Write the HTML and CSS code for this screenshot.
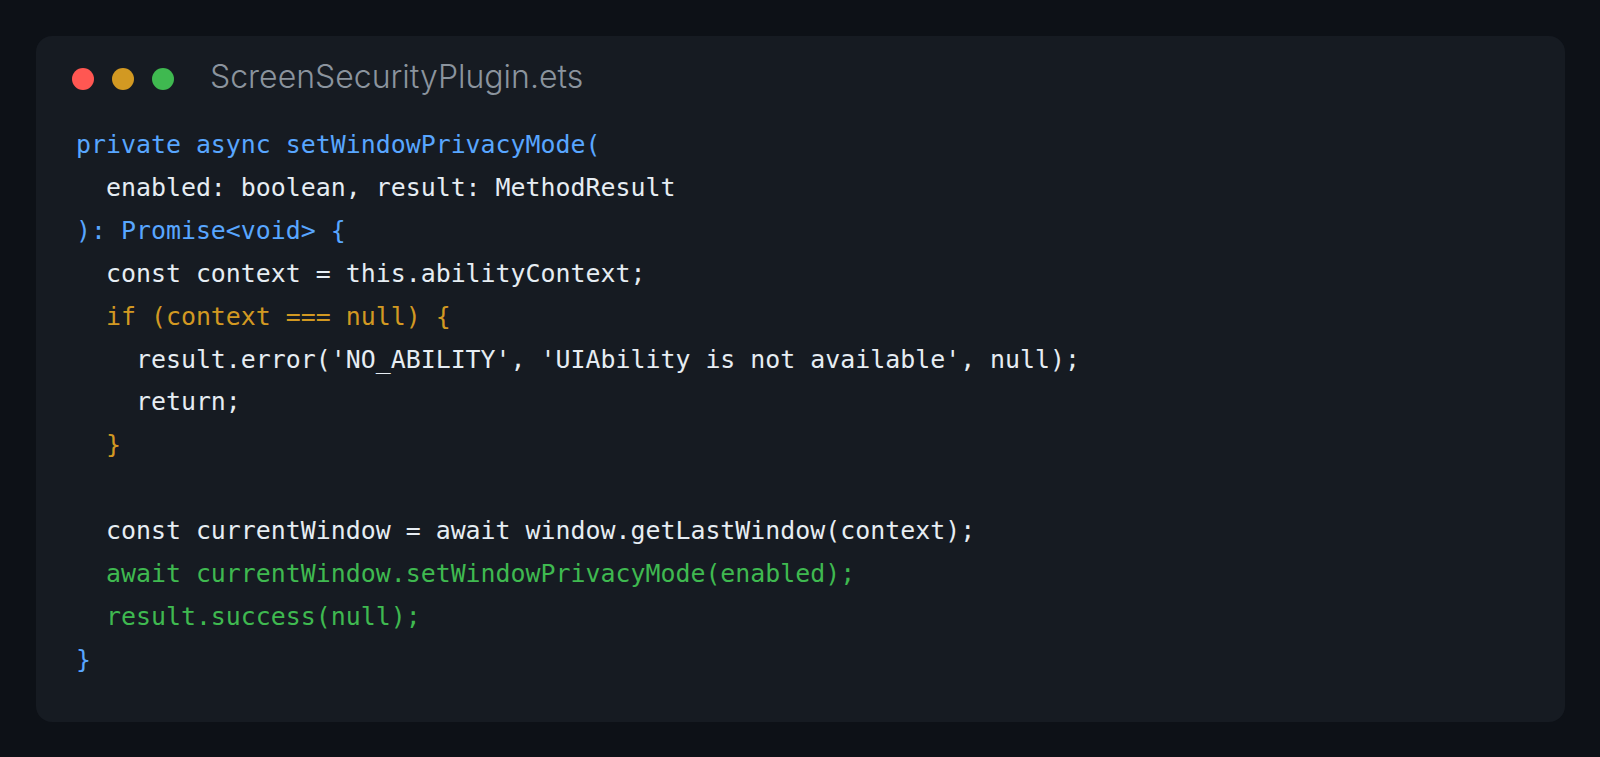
FILE: index.html
```html
<!DOCTYPE html>
<html lang="en">
<head>
<meta charset="utf-8">
<title>ScreenSecurityPlugin.ets</title>
<link rel="stylesheet" href="styles.css">
</head>
<body>
<div class="card">
  <div class="header">
    <div class="dots">
      <span class="dot dot-red"></span>
      <span class="dot dot-yellow"></span>
      <span class="dot dot-green"></span>
    </div>
    <div class="title">ScreenSecurityPlugin.ets</div>
  </div>
  <pre class="code"><span class="blue">private async setWindowPrivacyMode(</span>
<span class="white">  enabled: boolean, result: MethodResult</span>
<span class="blue">): Promise&lt;void&gt; {</span>
<span class="white">  const context = this.abilityContext;</span>
<span class="orange">  if (context === null) {</span>
<span class="white">    result.error('NO_ABILITY', 'UIAbility is not available', null);</span>
<span class="white">    return;</span>
<span class="orange">  }</span>

<span class="white">  const currentWindow = await window.getLastWindow(context);</span>
<span class="green">  await currentWindow.setWindowPrivacyMode(enabled);</span>
<span class="green">  result.success(null);</span>
<span class="blue">}</span></pre>
</div>
</body>
</html>
```
FILE: styles.css
```css
html, body {
  margin: 0;
  padding: 0;
  background: #0d1117;
}
body {
  width: 1600px;
  height: 757px;
  box-sizing: border-box;
  padding: 36px 35px 35px 36px;
  overflow: hidden;
}
.card {
  height: 100%;
  box-sizing: border-box;
  background: #161b22;
  border-radius: 16px;
  padding: 21px 36px 0 36px;
}
.header {
  display: flex;
  align-items: center;
  height: 43px;
}
.dots {
  display: flex;
  gap: 18px;
  margin-right: 36px;
}
.dot {
  width: 22px;
  height: 22px;
  border-radius: 50%;
  display: block;
}
.dot-red { background: #ff5752; }
.dot-yellow { background: #d29922; }
.dot-green { background: #3fb950; }
.title {
  font-family: Inter, "Noto Sans", sans-serif;
  font-size: 32px;
  font-weight: 300;
  color: #8b949e;
  line-height: 43px;
  margin-bottom: 4px;
}
.code {
  margin: 24px 0 0 4px;
  font-family: "DejaVu Sans Mono", monospace;
  font-size: 24.9px;
  line-height: 42.9px;
  color: #e6edf3;
}
.blue { color: #58a6ff; }
.white { color: #e6edf3; }
.orange { color: #d29922; }
.green { color: #3fb950; }
```
